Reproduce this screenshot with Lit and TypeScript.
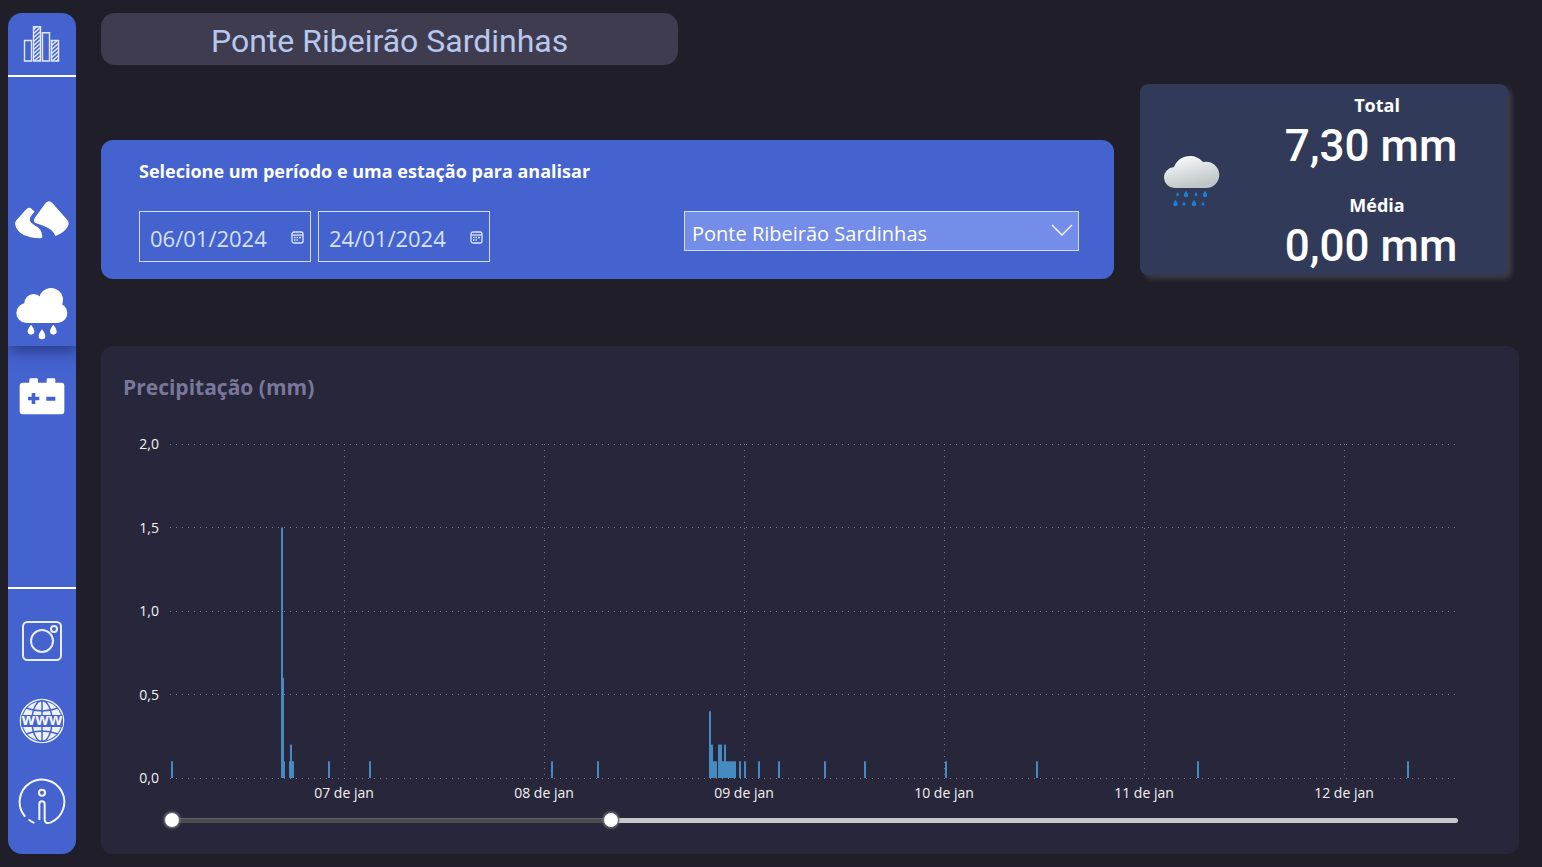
import { LitElement, html, svg, css } from "lit";
import { customElement, state } from "lit/decorators.js";

const SPAN = 1287;
const MAX_MM = 2;

/* [position on the time axis, millimetres of rain] */
const RAIN: [number, number][] = [
  [2, 0.1], [112, 1.5], [113, 0.6], [114, 0.1], [120, 0.1], [121, 0.2], [123, 0.1],
  [159, 0.1], [200, 0.1], [382, 0.1], [428, 0.1], [540, 0.4], [542, 0.2], [544, 0.1],
  [546, 0.1], [549, 0.2], [551, 0.2], [553, 0.1], [555, 0.2], [557, 0.1], [559, 0.1],
  [561, 0.1], [563, 0.1], [565, 0.1], [570, 0.1], [575, 0.1], [589, 0.1], [609, 0.1],
  [655, 0.1], [695, 0.1], [776, 0.1], [867, 0.1], [1028, 0.1], [1238, 0.1],
];
const DAYS: [number, string][] = [
  [174, "07 de jan"], [374, "08 de jan"], [574, "09 de jan"],
  [774, "10 de jan"], [974, "11 de jan"], [1174, "12 de jan"],
];
const TICKS = [2, 1.5, 1, 0.5, 0];

const pctX = (v: number) => `${(v / SPAN) * 100}%`;
const pctY = (v: number) => `${(1 - v / MAX_MM) * 100}%`;

@customElement("rain-chart")
export class RainChart extends LitElement {
  static styles = css`
    :host { display: flex; flex: 1; min-height: 200px; }
    .plot { display: block; width: 100%; height: 100%; overflow: visible; }
    .grid { stroke: #7c7a8e; stroke-width: 1; stroke-dasharray: 1 5; shape-rendering: crispEdges; }
    .bar { fill: #468ac2; }
    .label { fill: #f2f2f6; font: 14px "Open Sans", "Noto Sans", sans-serif; }
    .tick { text-anchor: end; }
    .day { text-anchor: middle; }
    .shift { transform: translate(-11px, 5px); }
    .below { transform: translateY(20px); }
  `;

  render() {
    return html`<svg class="plot" role="img" aria-label="Precipitação (mm)">
      ${TICKS.map((t) => svg`<line class="grid" x1="0" x2="100%" y1=${pctY(t)} y2=${pctY(t)}></line>`)}
      ${DAYS.map(([d]) => svg`<line class="grid" x1=${pctX(d)} x2=${pctX(d)} y1="0" y2="100%"></line>`)}
      ${RAIN.map(([x, mm]) => svg`<rect class="bar" x=${pctX(x - 1)} y=${pctY(mm)} width="2" height=${`${(mm / MAX_MM) * 100}%`}></rect>`)}
      <g class="shift">
        ${TICKS.map((t) => svg`<text class="label tick" x="0" y=${pctY(t)}>${t.toFixed(1).replace(".", ",")}</text>`)}
      </g>
      <g class="below">
        ${DAYS.map(([d, name]) => svg`<text class="label day" x=${pctX(d)} y="100%">${name}</text>`)}
      </g>
    </svg>`;
  }
}

@customElement("range-slider")
export class RangeSlider extends LitElement {
  @state() private from = 0;
  @state() private to = 341;

  static styles = css`
    :host { display: block; position: relative; height: 20px; margin: 0 -9px 0 -6px; }
    .rail { position: absolute; top: 8px; left: 8px; right: 8px; height: 5px; border-radius: 3px; background: #c8c8ca; }
    .fill { height: 100%; background: #4b4b4d; border-top: 1px solid #5f5f62; box-sizing: border-box; }
    .thumb {
      position: absolute; inset: 0; width: 100%; height: 20px; margin: 0;
      appearance: none; background: transparent; pointer-events: none;
    }
    .thumb::-webkit-slider-thumb {
      appearance: none; width: 16px; height: 16px; border-radius: 50%; pointer-events: auto;
      background: #fff; border: 1px solid #56565a; box-shadow: 0 0 3px #8a8a8e; box-sizing: border-box;
    }
  `;

  render() {
    return html`
      <div class="rail"><div class="fill" style="width:${(this.to - this.from) / 10}%;margin-left:${this.from / 10}%"></div></div>
      <input class="thumb" type="range" min="0" max="1000" aria-label="Início do intervalo" .value=${String(this.from)}
        @input=${(e: Event) => (this.from = Math.min(+(e.target as HTMLInputElement).value, this.to))} />
      <input class="thumb" type="range" min="0" max="1000" aria-label="Fim do intervalo" .value=${String(this.to)}
        @input=${(e: Event) => (this.to = Math.max(+(e.target as HTMLInputElement).value, this.from))} />
    `;
  }
}

const logoIcon = html`<svg width="38" height="38" viewBox="23 25 38 38" fill="none" stroke="#e3e9fc" stroke-width="1.4">
  <defs>
    <clipPath id="b2"><path d="M33.5 27h7v34h-7z" /></clipPath>
    <clipPath id="b4"><path d="M51.5 40.500h7V61h-7z" /></clipPath>
  </defs>
  <path d="M24.500 40.500h7V61h-7zM33.500 26.700h7V61h-7zM42.500 32.700h7V61h-7zM51.500 40.500h7V61h-7z" />
  <g clip-path="url(#b2)">${[26, 30, 34, 38, 42, 46, 50, 54, 58, 62].map((y) => svg`<path d="M33 ${y + 4}l8 -7"></path>`)}</g>
  <g clip-path="url(#b4)">${[38, 42, 46, 50, 54, 58, 62].map((y) => svg`<path d="M51 ${y + 4}l8 -7"></path>`)}</g>
</svg>`;

const mountainIcon = html`<svg width="56" height="40" viewBox="42 32 168 120" fill="#fff">
  <path d="M46 108Q43 101 48 94L76 63Q84 52 93 57L104 67Q86 84 90 95Q93 103 106 109Q127 119 127 143Q126 147 121 147Q56 145 46 108z" />
  <path d="M137 41Q147 31 157 41L202 92Q209 101 204 111Q193 131 166 140Q159 119 130 109Q112 103 105 100Q98 95 106 83z" />
</svg>`;

const rainIcon = html`<svg width="52" height="53" viewBox="48 24 156 159" fill="#fff">
  <circle cx="153" cy="63" r="36" /><circle cx="101" cy="73" r="28" />
  <circle cx="79" cy="102" r="30" /><circle cx="172" cy="102" r="30" />
  <path d="M79 75h90v57H79z" />
  <path d="M93 137Q103 150 103 157A10 10 0 0 1 83 157Q83 150 93 137z" />
  <path d="M126 151Q136 164 136 171A10 10 0 0 1 116 171Q116 164 126 151z" />
  <path d="M160 137Q170 150 170 157A10 10 0 0 1 150 157Q150 150 160 137z" />
</svg>`;

const batteryIcon = html`<svg width="46" height="38" viewBox="56 298 138 114" fill="#fff">
  <path fill-rule="evenodd" d="M68 312H87V303Q87 299 91 299H109Q113 299 113 303V312H139V303Q139 299 143 299H161Q165 299 165 303V312H183Q192 312 192 321V398Q192 407 183 407H67Q58 407 58 398V321Q58 312 68 312zM94 343V354H83V365H94V376H105V365H117V354H105V343zM138 354V366H165V354z" />
</svg>`;

const instagramIcon = html`<svg width="42" height="42" viewBox="0 0 42 42" fill="none" stroke="#e8edfd" stroke-width="2">
  <rect x="2" y="2" width="38" height="38" rx="4.500" /><circle cx="21" cy="21" r="11" />
  <circle cx="33" cy="9" r="3" />
</svg>`;

const globeIcon = html`<svg width="46" height="46" viewBox="-23 -23 46 46">
  <circle r="21.500" fill="none" stroke="#f0f3fe" stroke-width="1.500" />
  <circle r="19.800" fill="#eef2fe" />
  <g fill="none" stroke="#4463cf" stroke-width="1.500">
    <path d="M0 -20V20M-16 -13Q0 -7 16 -13M-16 13Q0 7 16 13" />
    <ellipse rx="10" ry="20.500" />
  </g>
  <path d="M-20.700 -6H20.700V6H-20.700z" fill="#4463cf" />
  <text class="www" x="0" y="4" text-anchor="middle">www</text>
</svg>`;

const infoIcon = html`<svg width="48" height="48" viewBox="54 111 144 144" fill="none" stroke="#f4f6ff" stroke-width="6" stroke-linecap="round">
  <path d="M74 228A67 67 0 1 1 153 247Q134 254 134 238V192A8 8 0 0 0 118 192V238" />
  <circle cx="126" cy="158" r="9" /><path d="M88 240Q94 245 101 248" />
</svg>`;

const calendarIcon = html`<svg width="13" height="13" viewBox="0 0 13 13" fill="none" stroke="#dfe7fc" stroke-width="1.300">
  <rect x="1" y="1" width="11" height="11" rx="2" /><path d="M1 4h11" />
  <path d="M3 6.500h1.500M5.500 6.500h1.500M8 6.500h2M3 9h1.500M5.500 9h1.500" stroke-width="1.600" />
</svg>`;

const smallDrop = (x: number, y: number, s: number) =>
  svg`<path d="M${x} ${y - 3 * s}Q${x + 2 * s} ${y} ${x + 2 * s} ${y + s}A${2 * s} ${2 * s} 0 0 1 ${x - 2 * s} ${y + s}Q${x - 2 * s} ${y} ${x} ${y - 3 * s}z"></path>`;

const weatherIcon = html`<svg width="56" height="54" viewBox="0 0 56 54">
  <defs><linearGradient id="cloud" x1="0" y1="0" x2="0.4" y2="1">
    <stop offset="0.1" stop-color="#fafafa" /><stop offset="1" stop-color="#bfc5c8" />
  </linearGradient></defs>
  <path fill="url(#cloud)" d="M11 34A10.500 10.500 0 0 1 10 13A17 17 0 0 1 39 8A13.200 13.200 0 1 1 41 34z" />
  <g fill="#1583dd">
    ${smallDrop(13.500, 40, 0.7)}${smallDrop(22, 40, 1.1)}${smallDrop(32, 40, 0.7)}${smallDrop(41, 40, 1.1)}
    ${smallDrop(11.500, 49, 1.1)}${smallDrop(20, 49.500, 0.7)}${smallDrop(30, 49, 1.1)}${smallDrop(39, 49.500, 0.7)}
  </g>
</svg>`;

@customElement("app-root")
export class AppRoot extends LitElement {
  static styles = css`
    :host {
      display: flex; min-height: 100vh; box-sizing: border-box; padding: 13px 23px 13px 8px; gap: 25px;
      background: #201e29; color: #fff; font-family: "Open Sans", "Noto Sans", sans-serif;
    }
    h1, h2, p, dl, dd { margin: 0; }

    .side { flex: none; width: 68px; display: flex; flex-direction: column; border-radius: 14px; background: #4463cf; overflow: hidden; }
    .logo { height: 62px; display: flex; align-items: center; justify-content: center; border-bottom: 2px solid #fff; }
    .pages { flex: 1; display: flex; flex-direction: column; gap: 18px; padding-top: 110px; }
    .link { display: flex; align-items: center; justify-content: center; height: 66px; }
    .active { margin-top: 9px; box-shadow: 2px 5px 14px rgba(20, 25, 70, 0.55); clip-path: inset(0 -20px -30px -20px); }
    .social { border-top: 2px solid #fff; padding: 12px 0 13px; }
    .social .link { height: 80px; }
    .www { font: bold 16px "Open Sans", sans-serif; fill: #f4f6ff; }

    .main { flex: 1; min-width: 0; display: flex; flex-direction: column; }
    .title {
      width: 40.7%; height: 52px; line-height: 56px; border-radius: 14px; background: #3f3c50; color: #b7c7ee; text-align: center;
      font-family: Roboto, sans-serif; font-size: 32px; font-weight: 400;
    }
    .row { display: flex; align-items: flex-start; gap: 26px; padding: 19px 11px 67px 0; }

    .filters { flex: 1; margin-top: 56px; height: 139px; box-sizing: border-box; padding: 19px 35px 0 38px; border-radius: 12px; background: #4463cf; }
    .heading { font-size: 18px; line-height: 24px; font-weight: 700; }
    .controls { display: flex; align-items: flex-start; justify-content: space-between; margin-top: 28px; }
    .dates { display: flex; gap: 7px; }
    .date { display: flex; align-items: center; box-sizing: border-box; width: 172px; height: 51px; padding: 2px 6px 0 10px; border: 1px solid #d3dcf8; }
    .field { flex: 1; min-width: 0; padding: 0; border: 0; background: none; color: #d6e0fb; font: 22px "Open Sans", sans-serif; outline: none; }
    .pick { display: flex; padding: 0; border: 0; background: none; }
    .station { position: relative; width: 395px; height: 40px; }
    .select {
      appearance: none; width: 100%; height: 100%; box-sizing: border-box; padding: 4px 40px 0 7px; border: 1px solid #d3dcf8; border-radius: 0;
      background: #738de8; color: #fff; font: 20px "Open Sans", sans-serif;
    }
    .chevron { position: absolute; right: 6px; top: 12px; pointer-events: none; }

    .card {
      flex: none; width: 368px; height: 191px; box-sizing: border-box; display: flex; align-items: center; border-radius: 8px;
      background: #323a5a; box-shadow: 4px 4px 5px rgba(255, 255, 255, 0.13);
    }
    .weather { width: 94px; box-sizing: border-box; padding-left: 24px; padding-top: 8px; }
    .stats { flex: 1; align-self: stretch; padding-top: 9px; text-align: center; }
    .name { padding-left: 12px; font-size: 18px; line-height: 24px; font-weight: 700; }
    .value { height: 76px; line-height: 58px; font-family: Roboto, sans-serif; font-size: 44px; font-weight: 500; }

    .panel { flex: 1; display: flex; flex-direction: column; box-sizing: border-box; padding: 26px 62px 24px 22px; border-radius: 12px; background: #28263a; }
    .caption { font-size: 21px; line-height: 30px; font-weight: 700; color: #79779a; }
    .chart { flex: 1; display: flex; flex-direction: column; margin-left: 47px; padding-top: 42px; gap: 32px; }
  `;

  render() {
    return html`
      <aside class="side">
        <div class="logo">${logoIcon}</div>
        <nav class="pages">
          <a class="link" href="#nivel" aria-label="Nível">${mountainIcon}</a>
          <a class="link active" href="#chuva" aria-label="Precipitação">${rainIcon}</a>
          <a class="link" href="#bateria" aria-label="Bateria">${batteryIcon}</a>
        </nav>
        <div class="social">
          <a class="link" href="#instagram" aria-label="Instagram">${instagramIcon}</a>
          <a class="link" href="#site" aria-label="Site">${globeIcon}</a>
          <a class="link" href="#sobre" aria-label="Sobre">${infoIcon}</a>
        </div>
      </aside>
      <main class="main">
        <h1 class="title">Ponte Ribeirão Sardinhas</h1>
        <div class="row">
          <section class="filters">
            <h2 class="heading">Selecione um período e uma estação para analisar</h2>
            <div class="controls">
              <div class="dates">
                <div class="date">
                  <input class="field" type="text" aria-label="Data inicial" value="06/01/2024" />
                  <button class="pick" aria-label="Escolher data inicial">${calendarIcon}</button>
                </div>
                <div class="date">
                  <input class="field" type="text" aria-label="Data final" value="24/01/2024" />
                  <button class="pick" aria-label="Escolher data final">${calendarIcon}</button>
                </div>
              </div>
              <div class="station">
                <select class="select" aria-label="Estação"><option>Ponte Ribeirão Sardinhas</option></select>
                <svg class="chevron" width="22" height="14" viewBox="0 0 22 14" fill="none" stroke="#fff" stroke-width="1.400"><path d="M1 2l10 10L21 2" /></svg>
              </div>
            </div>
          </section>
          <section class="card">
            <div class="weather">${weatherIcon}</div>
            <dl class="stats">
              <dt class="name">Total</dt><dd class="value">7,30 mm</dd>
              <dt class="name">Média</dt><dd class="value">0,00 mm</dd>
            </dl>
          </section>
        </div>
        <section class="panel">
          <h2 class="caption">Precipitação (mm)</h2>
          <div class="chart"><rain-chart></rain-chart><range-slider></range-slider></div>
        </section>
      </main>
    `;
  }
}
